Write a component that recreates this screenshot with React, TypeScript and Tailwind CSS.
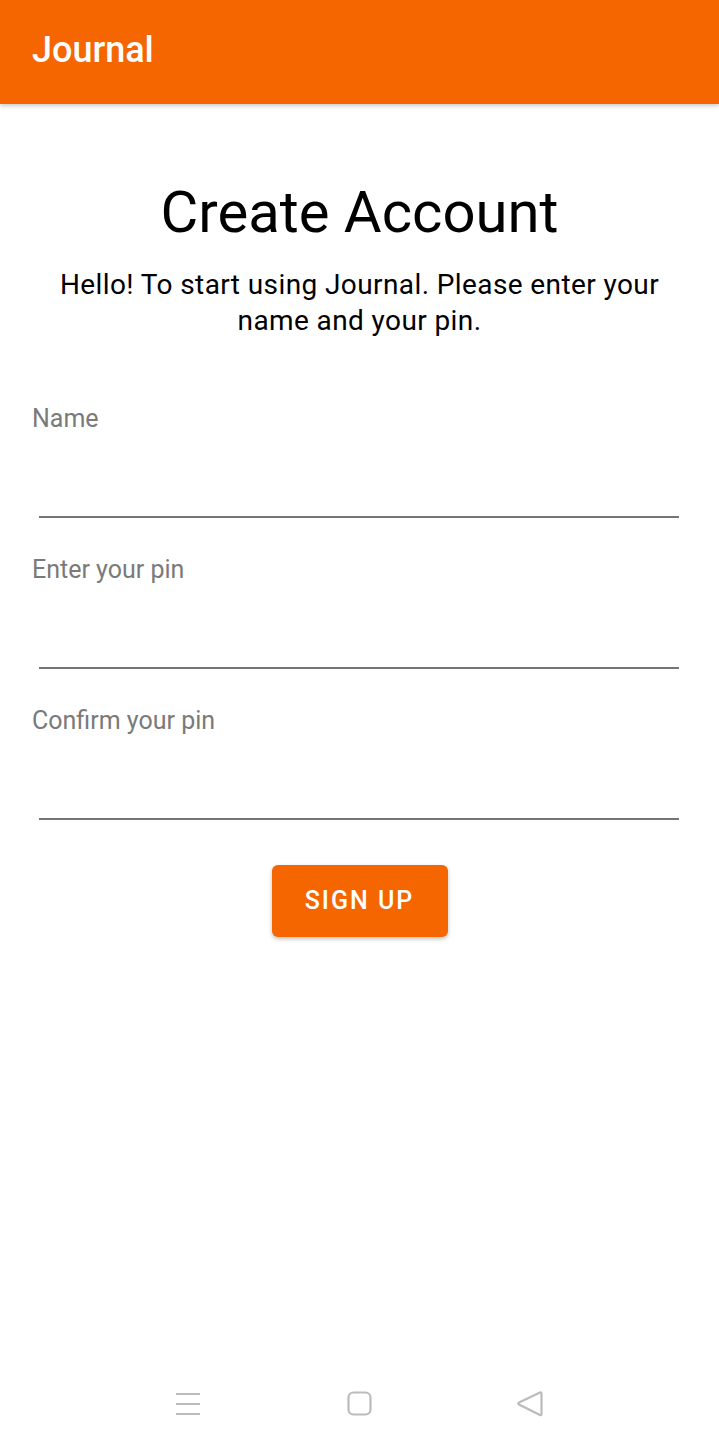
export default function App() {
  const fields = ["Name", "Enter your pin", "Confirm your pin"];
  return (
    <div className="relative w-[719px] h-[1449px] bg-white overflow-hidden font-['Roboto',sans-serif]">
      <div className="h-[104px] bg-[#f56600] flex items-center px-[32px] shadow-[0_2px_4px_rgba(0,0,0,0.2)] relative z-10">
        <span className="text-white text-[36px] font-medium leading-none mt-[-4px]">Journal</span>
      </div>
      <div className="flex flex-col items-center pt-[76px]">
        <h1 className="text-[58px] leading-[64px] text-black font-normal">Create Account</h1>
        <p className="mt-[23px] text-[28px] leading-[36px] text-black text-center px-[50px] tracking-[0.4px]">
          Hello! To start using Journal. Please enter your
          <br />
          name and your pin.
        </p>
      </div>
      <div className="flex flex-col mt-[65px]">
        {fields.map((f) => (
          <div key={f} className="flex flex-col h-[151px]">
            <span className="pl-[32px] text-[25px] leading-[30px] text-[#7a7a7a]">{f}</span>
            <div className="mt-[82px] ml-[39px] mr-[40px] h-[2px] bg-[#757575]" />
          </div>
        ))}
      </div>
      <div className="flex justify-center mt-[8px]">
        <button className="w-[176px] h-[72px] rounded-[6px] bg-[#f56600] text-white text-[25px] font-medium tracking-[2px] shadow-[0_2px_4px_rgba(0,0,0,0.25)]">
          SIGN UP
        </button>
      </div>
      <div className="absolute bottom-0 left-0 right-0 h-[90px] flex items-center">
        <div className="absolute left-[175px] top-[32px]">
          <svg width="26" height="26" viewBox="0 0 26 26">
            <path d="M1 3h24M1 13h24M1 23h24" stroke="#bbbbbb" strokeWidth="2" />
          </svg>
        </div>
        <div className="absolute left-[347px] top-[32px]">
          <svg width="26" height="26" viewBox="0 0 26 26">
            <rect x="1.5" y="1.5" width="22" height="22" rx="5" fill="none" stroke="#bbbbbb" strokeWidth="2.2" />
          </svg>
        </div>
        <div className="absolute left-[516px] top-[31px]">
          <svg width="28" height="28" viewBox="0 0 28 28">
            <path d="M24 2.5 L3 12.5 Q1.5 13.5 3 14.5 L24 25 Q25.5 25.5 25.5 24 V4 Q25.5 1.8 24 2.5 Z" fill="none" stroke="#bbbbbb" strokeWidth="2.2" strokeLinejoin="round" />
          </svg>
        </div>
      </div>
    </div>
  );
}
